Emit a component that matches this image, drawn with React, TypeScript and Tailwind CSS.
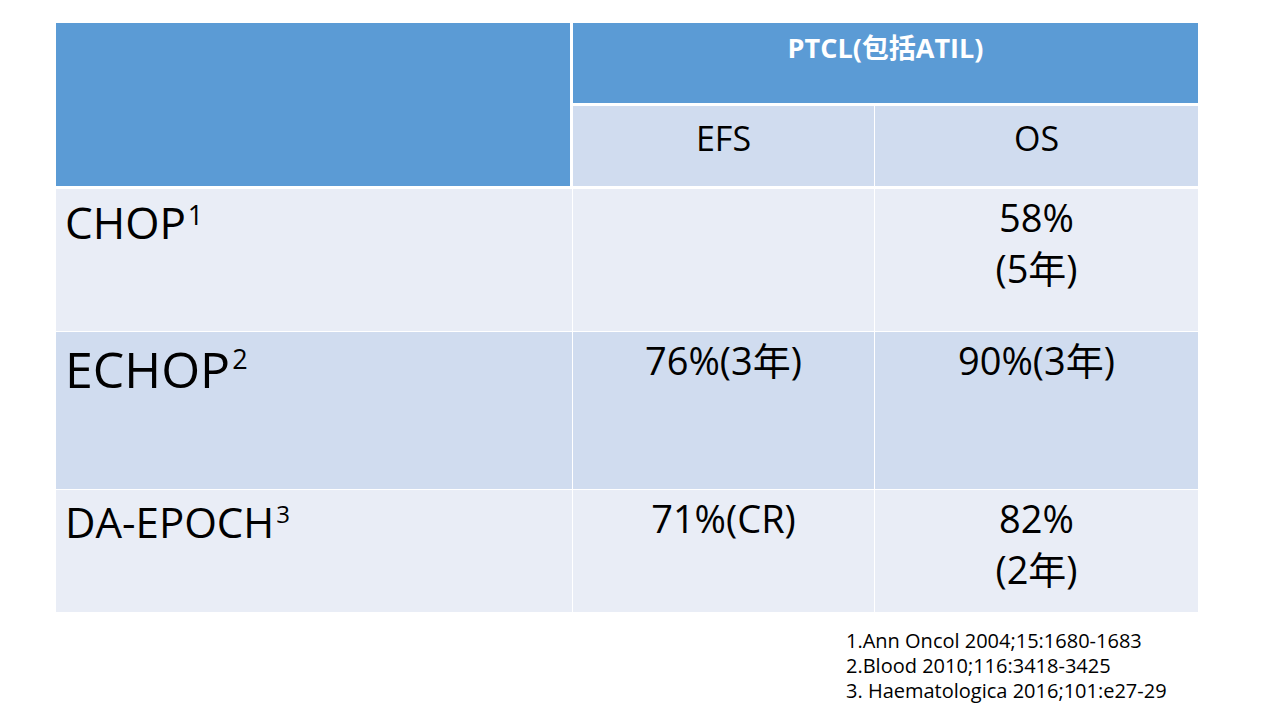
import React from "react";

const font = { fontFamily: '"Open Sans", "Noto Sans CJK SC", sans-serif' };

type Row = {
  name: string;
  sup: string;
  nameSize: string;
  supSize: string;
  namePad: string;
  height: string;
  bg: string;
  efs: string[];
  os: string[];
};

const rows: Row[] = [
  {
    name: "CHOP",
    sup: "1",
    nameSize: "text-[44px]",
    supSize: "text-[27px]",
    namePad: "pt-[11px]",
    height: "h-[142px]",
    bg: "bg-[#e9edf6]",
    efs: [],
    os: ["58%", "(5年)"],
  },
  {
    name: "ECHOP",
    sup: "2",
    nameSize: "text-[50px]",
    supSize: "text-[27px]",
    namePad: "pt-[12px]",
    height: "h-[157px]",
    bg: "bg-[#d0dcef]",
    efs: ["76%(3年)"],
    os: ["90%(3年)"],
  },
  {
    name: "DA-EPOCH",
    sup: "3",
    nameSize: "text-[42px]",
    supSize: "text-[24px]",
    namePad: "pt-[11px]",
    height: "h-[122px]",
    bg: "bg-[#e9edf6]",
    efs: ["71%(CR)"],
    os: ["82%", "(2年)"],
  },
];

const Value = ({ lines }: { lines: string[] }) => (
  <div className="pt-[3px] text-center text-[38px] leading-[51px] text-black">
    {lines.map((l) => (
      <div key={l}>{l}</div>
    ))}
  </div>
);

export default function App() {
  return (
    <div className="w-[1280px] h-[720px] bg-white overflow-hidden" style={font}>
      <div className="ml-[56px] pt-[23px] w-[1142px]">
        {/* header */}
        <div className="flex gap-x-[3px]">
          <div className="w-[514px] h-[163px] bg-[#5b9bd5]" />
          <div className="flex-1 flex flex-col gap-y-[3px]">
            <div className="h-[80px] bg-[#5b9bd5] pt-[11px] text-center text-[27px] leading-none font-bold text-white">
              PTCL(包括ATIL)
            </div>
            <div className="h-[80px] grid grid-cols-[301px_323px] gap-x-px">
              <div className="bg-[#d0dcef] pt-[15px] text-center text-[34px] leading-none text-black">EFS</div>
              <div className="bg-[#d0dcef] pt-[15px] text-center text-[34px] leading-none text-black">OS</div>
            </div>
          </div>
        </div>

        {/* body */}
        <div className="mt-[3px] flex flex-col gap-y-px">
          {rows.map((r) => (
            <div key={r.name} className={`grid grid-cols-[516px_301px_323px] gap-x-px ${r.height}`}>
              <div className={`${r.bg} ${r.namePad} pl-[9px] text-black`}>
                <span className={`${r.nameSize} leading-none`}>{r.name}</span>
                <span className={`${r.supSize} leading-none align-top inline-block pt-[1px] pl-[2px]`}>{r.sup}</span>
              </div>
              <div className={r.bg}>
                <Value lines={r.efs} />
              </div>
              <div className={r.bg}>
                <Value lines={r.os} />
              </div>
            </div>
          ))}
        </div>

        {/* references */}
        <div className="ml-[790px] mt-[16px] text-[20px] leading-[25px] text-black">
          <div>1.Ann Oncol 2004;15:1680-1683</div>
          <div>2.Blood 2010;116:3418-3425</div>
          <div>3. Haematologica 2016;101:e27-29</div>
        </div>
      </div>
    </div>
  );
}
